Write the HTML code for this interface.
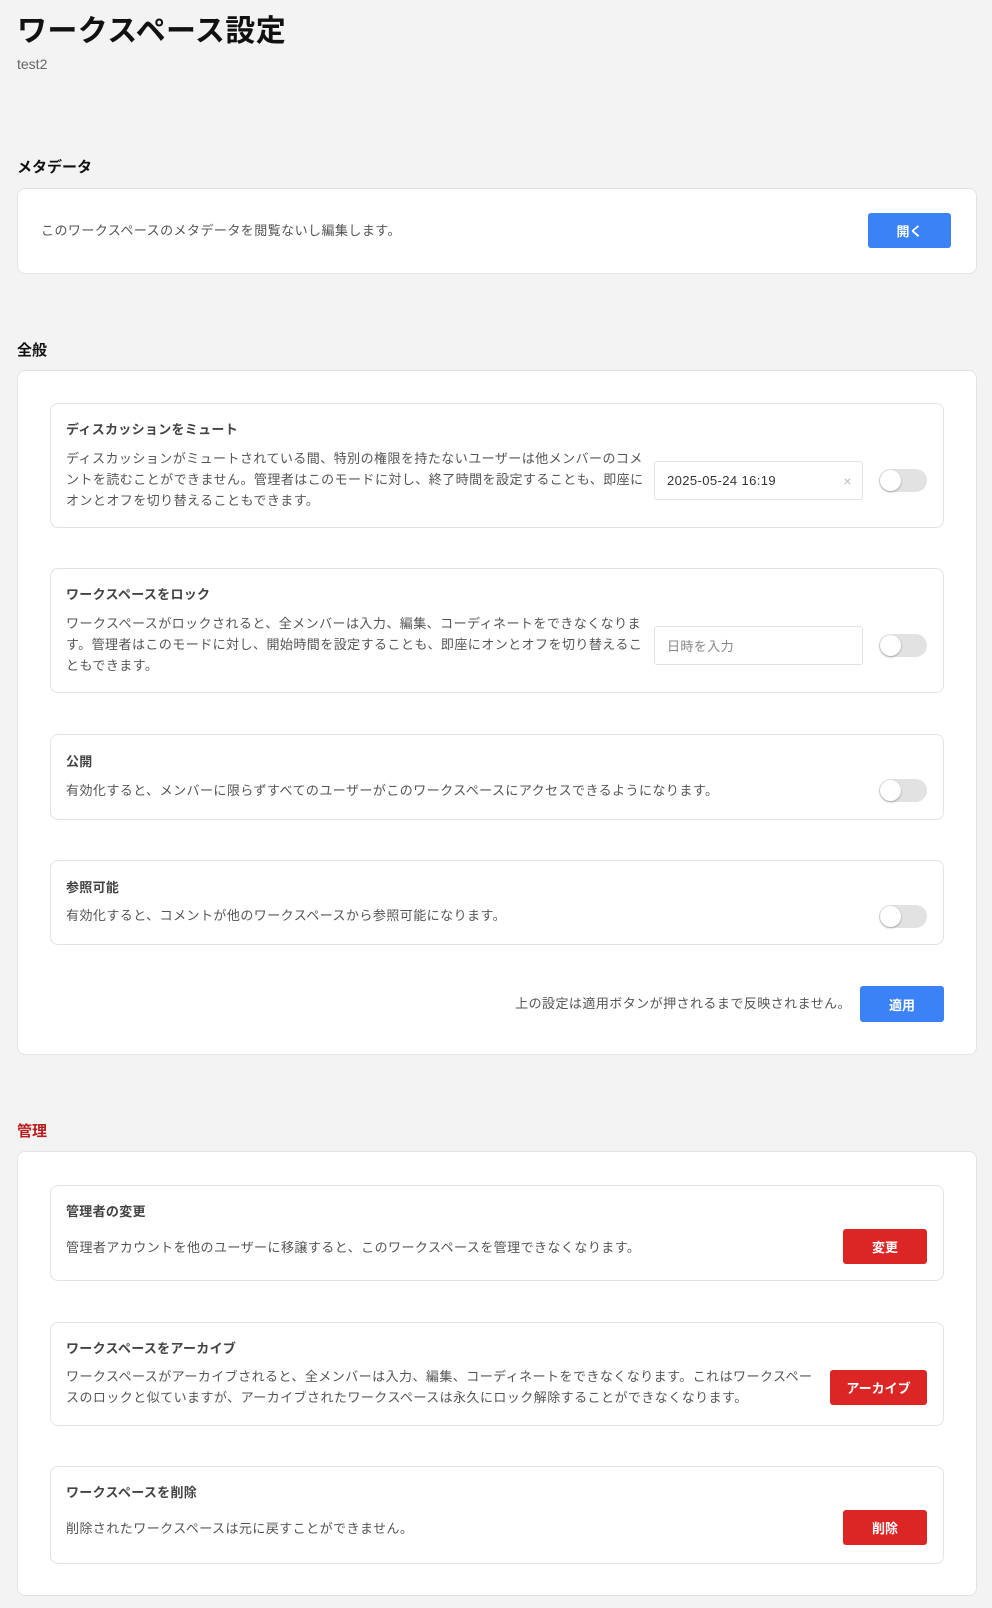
<!DOCTYPE html>
<html><head><meta charset="utf-8"><style>
*{box-sizing:border-box;margin:0;padding:0}
body{width:992px;height:1608px;background:#f3f3f3;font-family:"Liberation Sans","Noto Sans CJK JP",sans-serif;position:relative;overflow:hidden;color:#222}
.a{position:absolute}
.card{position:absolute;background:#fff;border:1px solid #e3e3e3;border-radius:8px}
.h{font-size:15px;font-weight:bold;color:#111}
.t{font-size:13px;font-weight:bold;color:#444;letter-spacing:0.3px}
.d{font-size:13px;color:#555;line-height:21px;letter-spacing:0.45px}
.btn{position:absolute;color:#fff;font-size:13px;font-weight:bold;border-radius:3px;display:flex;align-items:center;justify-content:center}
.blue{background:#3b82f6}.red{background:#dc2626}
.tg{position:absolute;width:48px;height:23px;border-radius:12px;background:#e2e2e2}
.tg:after{content:"";position:absolute;left:1px;top:1px;width:21px;height:21px;border-radius:50%;background:#fff;box-shadow:0 1px 2px rgba(0,0,0,.3)}
.in{position:absolute;border:1px solid #e2e2e2;border-radius:3px;background:#fff;font-size:13px;padding-left:12px;display:flex;align-items:center;letter-spacing:0.4px}
</style></head><body>
<div class="a" style="left:17px;top:6px;font-size:30px;font-weight:bold;color:#111;letter-spacing:0.4px">ワークスペース設定</div>
<div class="a" style="left:17px;top:56px;font-size:14px;color:#666">test2</div>

<div class="a h" style="left:17px;top:156px">メタデータ</div>
<div class="card" style="left:17px;top:188px;width:960px;height:86px"></div>
<div class="a d" style="left:41px;top:220px">このワークスペースのメタデータを閲覧ないし編集します。</div>
<div class="btn blue" style="left:868px;top:213px;width:83px;height:35px">開く</div>

<div class="a h" style="left:17px;top:339px">全般</div>
<div class="card" style="left:17px;top:370px;width:960px;height:685px"></div>

<div class="card" style="left:50px;top:403px;width:894px;height:125px"></div>
<div class="a t" style="left:66px;top:419px">ディスカッションをミュート</div>
<div class="a d" style="left:66px;top:448px;width:580px">ディスカッションがミュートされている間、特別の権限を持たないユーザーは他メンバーのコメントを読むことができません。管理者はこのモードに対し、終了時間を設定することも、即座にオンとオフを切り替えることもできます。</div>
<div class="in" style="left:654px;top:461px;width:209px;height:39px;color:#333">2025-05-24 16:19<span style="position:absolute;right:10px;color:#bbb;font-size:14px">×</span></div>
<div class="tg" style="left:879px;top:469px"></div>

<div class="card" style="left:50px;top:568px;width:894px;height:125px"></div>
<div class="a t" style="left:66px;top:584px">ワークスペースをロック</div>
<div class="a d" style="left:66px;top:613px;width:584px">ワークスペースがロックされると、全メンバーは入力、編集、コーディネートをできなくなります。管理者はこのモードに対し、開始時間を設定することも、即座にオンとオフを切り替えることもできます。</div>
<div class="in" style="left:654px;top:626px;width:209px;height:39px;color:#888">日時を入力</div>
<div class="tg" style="left:879px;top:634px"></div>

<div class="card" style="left:50px;top:734px;width:894px;height:86px"></div>
<div class="a t" style="left:66px;top:751px">公開</div>
<div class="a d" style="left:66px;top:780px">有効化すると、メンバーに限らずすべてのユーザーがこのワークスペースにアクセスできるようになります。</div>
<div class="tg" style="left:879px;top:779px"></div>

<div class="card" style="left:50px;top:860px;width:894px;height:85px"></div>
<div class="a t" style="left:66px;top:877px">参照可能</div>
<div class="a d" style="left:66px;top:905px">有効化すると、コメントが他のワークスペースから参照可能になります。</div>
<div class="tg" style="left:879px;top:905px"></div>

<div class="a d" style="right:141px;top:993px;text-align:right;white-space:nowrap">上の設定は適用ボタンが押されるまで反映されません。</div>
<div class="btn blue" style="left:860px;top:986px;width:84px;height:36px">適用</div>

<div class="a h" style="left:17px;top:1120px;color:#b91c1c">管理</div>
<div class="card" style="left:17px;top:1151px;width:960px;height:445px"></div>

<div class="card" style="left:50px;top:1185px;width:894px;height:96px"></div>
<div class="a t" style="left:66px;top:1201px">管理者の変更</div>
<div class="a d" style="left:66px;top:1237px">管理者アカウントを他のユーザーに移譲すると、このワークスペースを管理できなくなります。</div>
<div class="btn red" style="left:843px;top:1229px;width:84px;height:35px">変更</div>

<div class="card" style="left:50px;top:1322px;width:894px;height:104px"></div>
<div class="a t" style="left:66px;top:1338px">ワークスペースをアーカイブ</div>
<div class="a d" style="left:66px;top:1366px;width:750px">ワークスペースがアーカイブされると、全メンバーは入力、編集、コーディネートをできなくなります。これはワークスペースのロックと似ていますが、アーカイブされたワークスペースは永久にロック解除することができなくなります。</div>
<div class="btn red" style="left:830px;top:1370px;width:97px;height:35px">アーカイブ</div>

<div class="card" style="left:50px;top:1466px;width:894px;height:98px"></div>
<div class="a t" style="left:66px;top:1482px">ワークスペースを削除</div>
<div class="a d" style="left:66px;top:1518px">削除されたワークスペースは元に戻すことができません。</div>
<div class="btn red" style="left:843px;top:1510px;width:84px;height:35px">削除</div>
</body></html>
